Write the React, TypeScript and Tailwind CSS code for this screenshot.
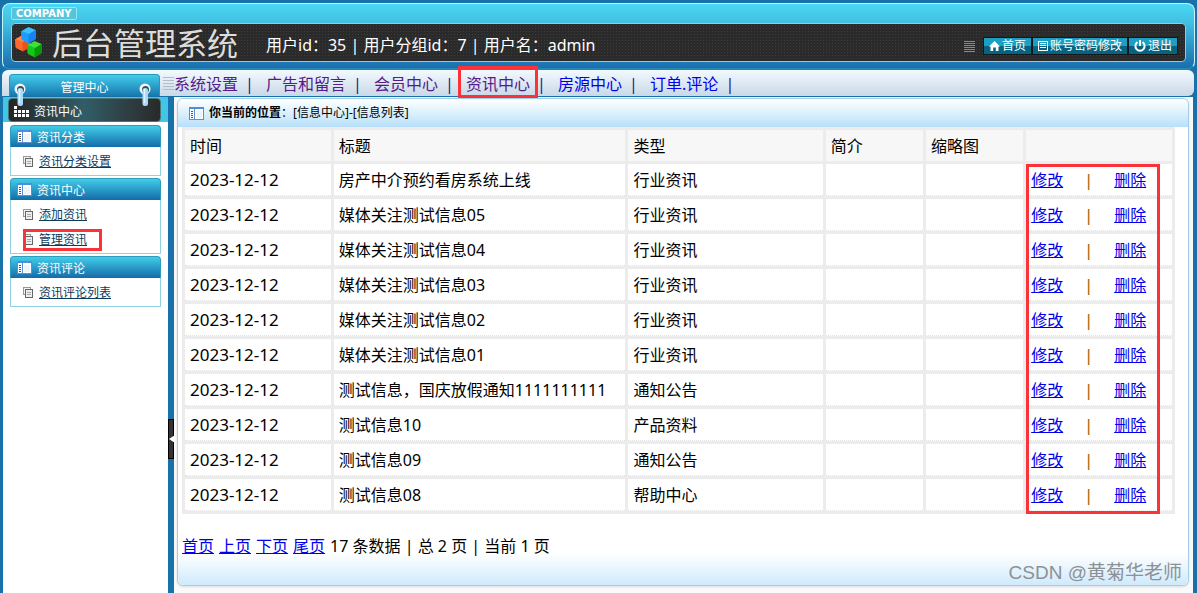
import React from "react";

const NAV = [
  { label: "系统设置", visited: true },
  { label: "广告和留言", visited: true },
  { label: "会员中心", visited: true },
  { label: "资讯中心", visited: true, marked: true },
  { label: "房源中心", visited: false },
  { label: "订单.评论", visited: false },
];

const MENUS = [
  { title: "资讯分类", links: ["资讯分类设置"] },
  { title: "资讯中心", links: ["添加资讯", "管理资讯"] },
  { title: "资讯评论", links: ["资讯评论列表"] },
];

const ROWS = [
  ["房产中介预约看房系统上线", "行业资讯"],
  ["媒体关注测试信息05", "行业资讯"],
  ["媒体关注测试信息04", "行业资讯"],
  ["媒体关注测试信息03", "行业资讯"],
  ["媒体关注测试信息02", "行业资讯"],
  ["媒体关注测试信息01", "行业资讯"],
  ["测试信息，国庆放假通知1111111111", "通知公告"],
  ["测试信息10", "产品资料"],
  ["测试信息09", "通知公告"],
  ["测试信息08", "帮助中心"],
];

function Cube({ x, y, top, left, right }: { x: number; y: number; top: string; left: string; right: string }) {
  return (
    <g transform={`translate(${x} ${y})`} strokeLinejoin="round">
      <path d="M7.5 0.5 L14.5 3.5 L8 7.5 L0.5 4.5Z" fill={top} stroke={top} />
      <path d="M0.5 4.5 L8 7.5 L8 16 L1 12.5Z" fill={left} stroke={left} />
      <path d="M8 7.5 L14.5 3.5 L14.5 12 L8 16Z" fill={right} stroke={right} />
    </g>
  );
}

function Logo() {
  return (
    <svg width="28" height="34" viewBox="0 0 28 34" aria-hidden="true">
      <Cube x={0} y={9} top="#ff8a4c" left="#ff6a2c" right="#e8541c" />
      <Cube x={6} y={1} top="#3cc0ff" left="#1f9dff" right="#1584f0" />
      <Cube x={12} y={15} top="#3fe03a" left="#12c818" right="#049a0c" />
    </svg>
  );
}

function PanelIcon() {
  return (
    <svg width="15" height="13" viewBox="0 0 15 13" className="shrink-0" aria-hidden="true">
      <rect x="0.5" y="0.5" width="14" height="12" fill="#fff" stroke="#5b8ed2" />
      <rect x="1" y="0" width="13" height="2" fill="#4d8de0" />
      <path d="M5.5 2v10" stroke="#5b8ed2" />
      <path d="M2 4.5h2M2 6.5h2M2 8.5h2M2 10.5h2" stroke="#555" />
      <rect x="7" y="4" width="6" height="7" fill="#edf4fc" />
    </svg>
  );
}

function CopyIcon() {
  return (
    <svg width="10" height="11" viewBox="0 0 10 11" className="shrink-0" aria-hidden="true">
      <rect x="0.5" y="0.5" width="7" height="7" fill="#f2f2f2" stroke="#999" />
      <rect x="2.5" y="2.5" width="7" height="8" fill="#eee" stroke="#666" />
      <path d="M4 5.5h4M4 7.5h4" stroke="#aaa" />
    </svg>
  );
}

function Ring() {
  return (
    <svg width="12" height="24" viewBox="0 0 12 24" aria-hidden="true">
      <circle cx="6" cy="6" r="5.5" fill="#f2f6f8" />
      <circle cx="6.5" cy="6.5" r="3.5" fill="#3a4c56" />
      <rect x="3.5" y="5" width="5.5" height="18" rx="2.5" fill="#a9d8f8" />
      <path d="M5.5 6v14" stroke="#def2ff" strokeWidth="1.5" />
    </svg>
  );
}

function HomeIcon() {
  return (
    <svg width="11" height="10" viewBox="0 0 11 10" aria-hidden="true">
      <path d="M5.5 0 L11 5.5 H9.5 V10 H6.8 V6.5 H4.2 V10 H1.5 V5.5 H0Z" fill="#fff" />
    </svg>
  );
}

function ListIcon() {
  return (
    <svg width="10" height="10" viewBox="0 0 10 10" aria-hidden="true">
      <rect x="0.5" y="0.5" width="9" height="9" fill="none" stroke="#fff" />
      <path d="M2 2.5h6M2 4.5h6M2 6.5h6" stroke="#fff" />
    </svg>
  );
}

function PowerIcon() {
  return (
    <svg width="12" height="12" viewBox="0 0 12 12" fill="none" stroke="#fff" strokeWidth="2" aria-hidden="true">
      <path d="M3.5 2.2 A4.6 4.6 0 1 0 8.5 2.2M6 0v6" />
    </svg>
  );
}

function HeaderButton({ icon, children }: { icon: React.ReactNode; children: React.ReactNode }) {
  return (
    <button
      type="button"
      className="flex h-[18px] items-center gap-[2px] border border-[#10181c] bg-linear-to-b from-[#1b9fc4] from-50% to-[#07637f] to-50% px-[5px] text-xs leading-4 text-white"
    >
      {icon}
      {children}
    </button>
  );
}

export default function App() {
  return (
    <div className="flex min-h-screen flex-col bg-[#1872a9] font-['Noto_Sans','Noto_Sans_CJK_SC',sans-serif] text-base leading-6 text-black">
      <header className="mx-[2px] mt-[3px] h-[67px] rounded-lg border border-b-2 border-[#c8f4fc] border-b-[#2387b4] bg-linear-to-b from-[#48d8f3] via-[#42bfe2] via-30% to-[#1a6eae] px-2">
        <div className="flex h-[19px] items-center">
          <span className="flex h-[13px] items-center rounded-[2px] border border-[#8ee8f8] bg-[#55c5dc] px-1 font-['DejaVu_Sans',sans-serif] text-[10px] leading-3 font-bold text-white">
            COMPANY
          </span>
        </div>
        <div className="flex h-[39px] items-center rounded-[4px] border border-[#6edcf0] bg-[#2a2a2a] bg-[radial-gradient(#3d3d3d_25%,transparent_30%)] bg-[size:3px_3px] pr-[7px] pl-[3px]">
          <Logo />
          <h1 className="ml-[9px] text-[31px] leading-9 whitespace-nowrap text-[#dddddd]">后台管理系统</h1>
          <p className="mt-[5px] ml-7 whitespace-nowrap text-white">用户id：35 | 用户分组id：7 | 用户名：admin</p>
          <div className="mt-[7px] ml-auto flex items-center">
            <svg width="11" height="11" viewBox="0 0 11 11" className="mr-2" aria-hidden="true">
              <path d="M0 .5h11M0 2.5h11M0 4.5h11M0 6.5h11M0 8.5h11M0 10.5h11" stroke="#888" />
            </svg>
            <HeaderButton icon={<HomeIcon />}>首页</HeaderButton>
            <HeaderButton icon={<ListIcon />}>账号密码修改</HeaderButton>
            <HeaderButton icon={<PowerIcon />}>退出</HeaderButton>
          </div>
        </div>
      </header>

      <div className="mr-[3px] ml-[2px] flex h-[26px] rounded-md rounded-bl-none bg-linear-to-b from-[#f3f9ff] to-[#c9d9e6]">
        <div className="relative mt-1 ml-[7px] flex h-[22px] w-[151px] shrink-0 items-center justify-center rounded-t-[4px] border border-b-0 border-[#229bb5] bg-linear-to-b from-[#43cce9] to-[#1878b0] pt-1 text-xs text-white">
          管理中心
          <span className="absolute top-2 left-1 z-10 h-6">
            <Ring />
          </span>
          <span className="absolute top-2 right-2 z-10 h-6">
            <Ring />
          </span>
        </div>
        <svg width="11" height="15" viewBox="0 0 11 15" className="mt-[7px] ml-[3px] shrink-0" aria-hidden="true">
          <path d="M0 .5h11M0 3.5h11M0 6.5h11M0 9.5h11M0 12.5h11" stroke="#b2bdc6" />
        </svg>
        <nav className="flex items-center pt-[2px] leading-5 whitespace-nowrap">
          {NAV.map((item) => (
            <React.Fragment key={item.label}>
              <a href="#" className={item.visited ? "relative text-[#551a8b]" : "relative text-[#0000ee]"}>
                {item.label}
                {item.marked && <span className="absolute -inset-x-2 -top-2 -bottom-1 border-3 border-[#fb3338]" />}
              </a>
              <span className="w-7 pl-[7px] text-[#26168a]">|</span>
            </React.Fragment>
          ))}
        </nav>
      </div>

      <div className="mt-px flex grow">
        <aside className="ml-[3px] w-[165px] shrink-0 bg-white text-xs">
          <div className="h-[25px] bg-[#42c5e6] pt-px pr-[7px] pl-[5px]">
            <div className="flex h-6 items-center gap-[5px] rounded-[4px] border border-[#477] bg-linear-to-r from-[#252525] via-[#305d68] to-[#292929] pt-[3px] pl-[5px] text-white">
              <svg width="15" height="11" viewBox="0 0 15 11" fill="#fff" aria-hidden="true">
                <path d="M0 0h3v3H0zM0 4h3v3H0zM4 4h3v3H4zM8 4h3v3H8zM12 4h3v3h-3zM0 8h3v3H0zM4 8h3v3H4zM8 8h3v3H8zM12 8h3v3h-3z" />
              </svg>
              资讯中心
            </div>
          </div>
          <div className="flex flex-col gap-[2px] pt-[3px] pr-[7px] pl-[7px]">
            {MENUS.map((menu) => (
              <section key={menu.title}>
                <h2 className="flex h-[22px] items-center gap-[5px] rounded-t-[4px] border border-b-0 border-[#2a9ebb] bg-linear-to-b from-[#42cde9] to-[#156ca8] pl-[6px] text-white">
                  <PanelIcon />
                  <span className="pt-[2px]">{menu.title}</span>
                </h2>
                <ul className="border border-t-0 border-[#8fd3e4] pt-[2px] pb-px">
                  {menu.links.map((link) => (
                    <li key={link} className="relative flex h-[25px] items-center gap-[6px] pl-3">
                      <CopyIcon />
                      <a href="#" className="text-[#0b3a5c] underline">
                        {link}
                      </a>
                      {link === "管理资讯" && (
                        <span className="absolute top-[2px] left-3 h-[22px] w-[79px] border-3 border-[#fb3338]" />
                      )}
                    </li>
                  ))}
                </ul>
              </section>
            ))}
          </div>
        </aside>

        <div className="w-[6px] shrink-0 bg-[#1872a9]">
          <button
            type="button"
            aria-label="收起"
            className="mt-[322px] flex h-10 w-[6px] items-center border border-black bg-[#333]"
          >
            <svg width="6" height="8" viewBox="0 0 6 8" className="shrink-0" aria-hidden="true">
              <path d="M0 4L6 0v8z" fill="#fff" />
            </svg>
          </button>
        </div>

        <main className="mr-1 flex min-w-0 grow bg-[#fafafa] pt-px pr-1 pb-[7px] pl-[3px]">
          <div className="relative flex grow flex-col rounded-md border border-[#a2cfea] bg-white shadow-sm">
            <div className="flex h-7 items-center gap-[5px] rounded-t-md bg-linear-to-b from-white via-[#d4edfc] via-60% to-[#b8e0fa] pl-[11px] text-xs">
              <PanelIcon />
              <p>
                <b>你当前的位置</b>：[信息中心]-[信息列表]
              </p>
            </div>
            <div className="relative mr-[13px] ml-1">
              <table className="w-full table-fixed border-separate border-spacing-[3px] bg-[#ececec] text-left">
                <colgroup>
                  <col className="w-[15%]" />
                  <col className="w-[30%]" />
                  <col className="w-[20%]" />
                  <col className="w-[10%]" />
                  <col className="w-[10%]" />
                  <col className="w-[15%]" />
                </colgroup>
                <thead>
                  <tr className="h-[31px]">
                    {["时间", "标题", "类型", "简介", "缩略图", ""].map((head, i) => (
                      <th key={i} className="bg-[#f7f7f7] px-[5px] py-0 font-normal">
                        {head}
                      </th>
                    ))}
                  </tr>
                </thead>
                <tbody>
                  {ROWS.map(([title, kind]) => (
                    <tr key={title} className="h-8 whitespace-nowrap *:border-b *:border-dotted *:border-[#e4e4e4] *:bg-white *:px-[5px] *:py-0">
                      <td className="text-[17px]">2023-12-12</td>
                      <td>{title}</td>
                      <td>{kind}</td>
                      <td />
                      <td />
                      <td>
                        <div className="flex items-center text-[#0000ee]">
                          <a href="#" className="underline">修改</a>
                          <span className="w-[51px] text-center font-medium text-[#a8690a]">|</span>
                          <a href="#" className="underline">删除</a>
                        </div>
                      </td>
                    </tr>
                  ))}
                </tbody>
              </table>
              <span className="pointer-events-none absolute top-[37px] right-[15px] bottom-0 w-[134px] border-3 border-[#fb3338]" />
            </div>
            <div className="flex grow flex-col rounded-b-md bg-linear-to-t from-[#cfeafc] to-white to-45% pt-5">
              <p className="flex gap-[5px] pl-1 whitespace-nowrap">
                {["首页", "上页", "下页", "尾页"].map((page) => (
                  <a key={page} href="#" className="text-[#0000ee] underline">
                    {page}
                  </a>
                ))}
                <span>17 条数据 | 总 2 页 | 当前 1 页</span>
              </p>
            </div>
            <span className="absolute right-[6px] bottom-0 font-['Liberation_Sans','Noto_Sans_CJK_SC',sans-serif] text-[19px] leading-6 text-[#8c9196]">
              CSDN @黄菊华老师
            </span>
          </div>
        </main>
      </div>
    </div>
  );
}
